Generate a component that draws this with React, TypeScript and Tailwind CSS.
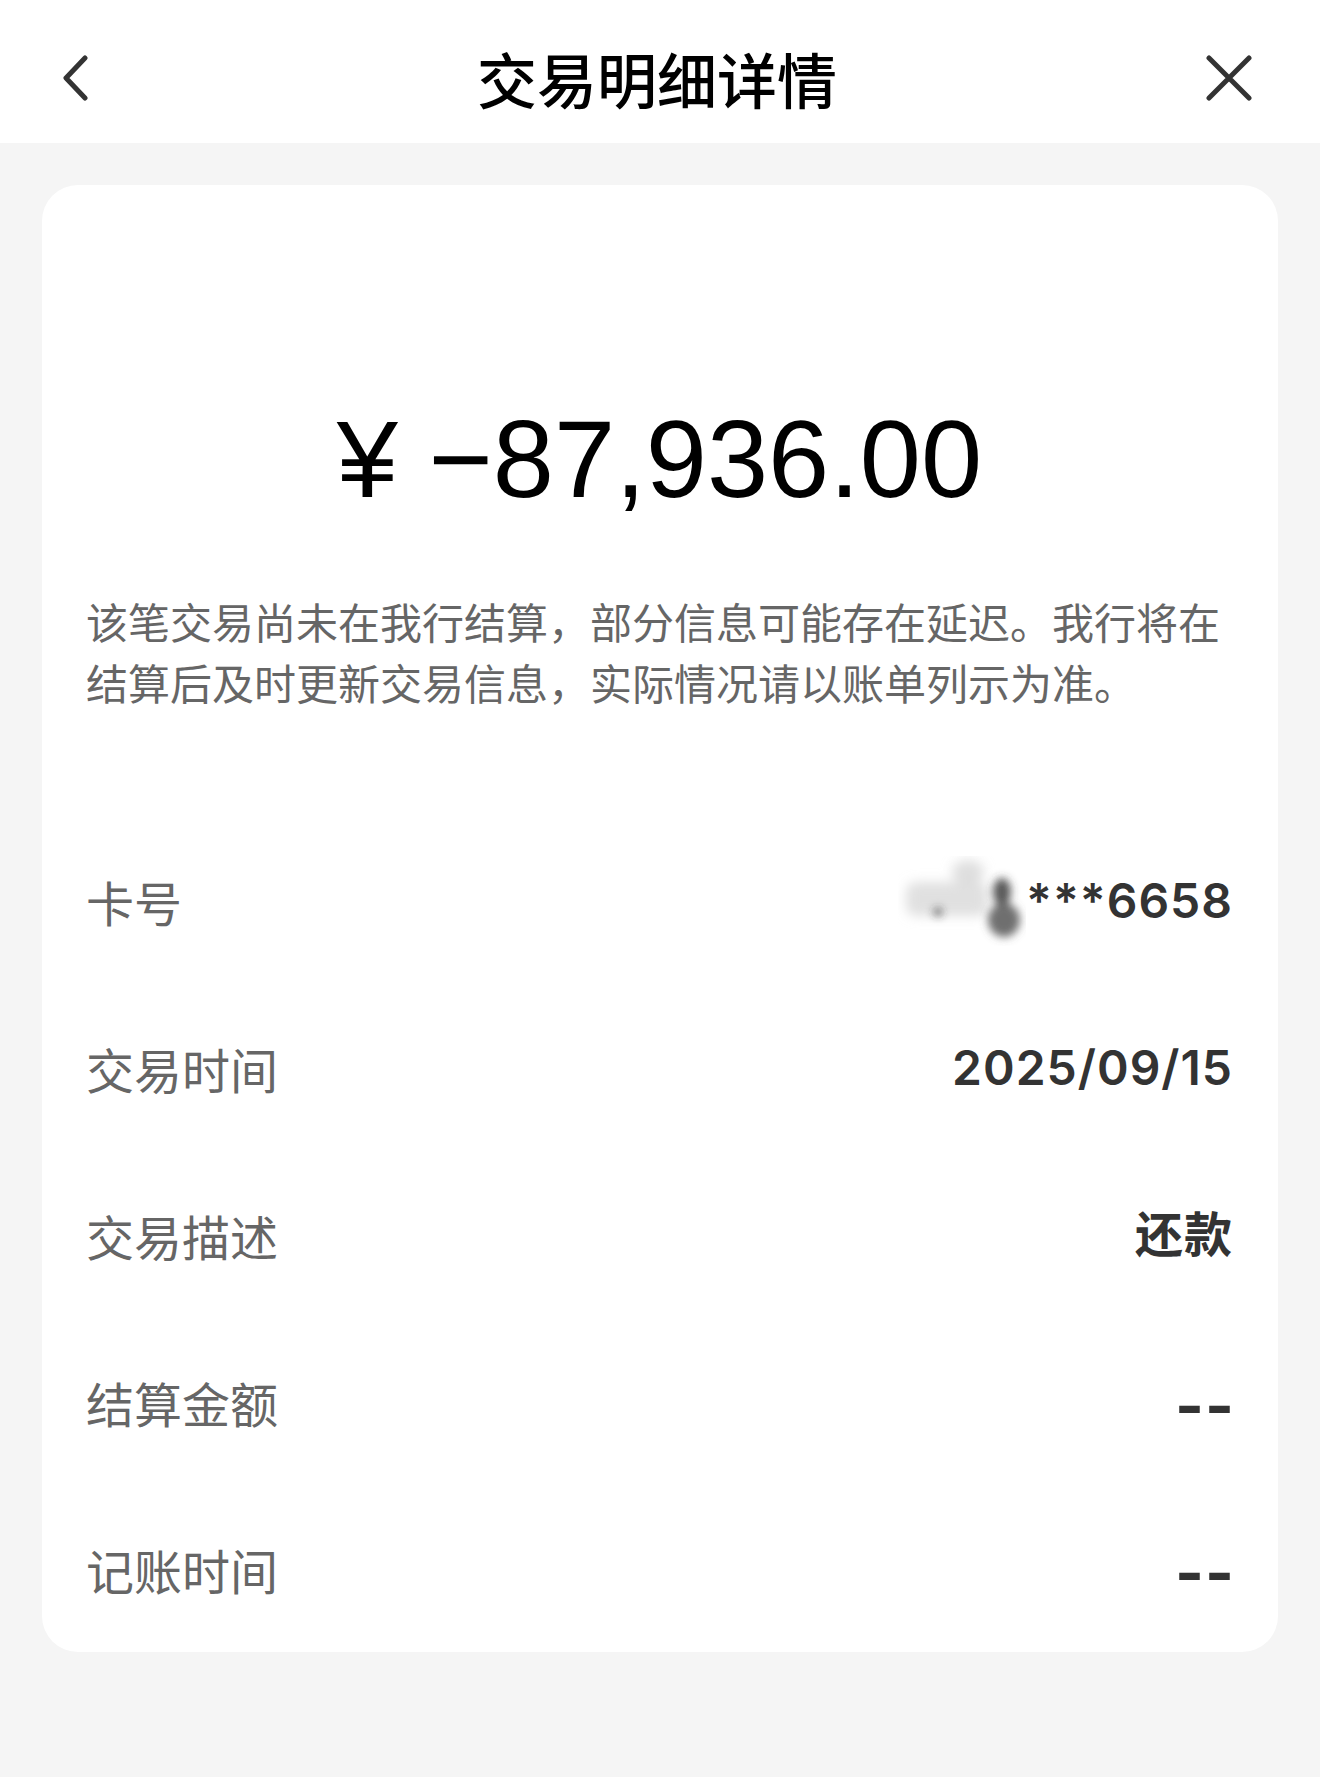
import React from 'react';

const rows = [
  { label: '卡号', value: '***6658', masked: true },
  { label: '交易时间', value: '2025/09/15' },
  { label: '交易描述', value: '还款' },
  { label: '结算金额', value: '--', dash: true },
  { label: '记账时间', value: '--', dash: true },
];

function CardSmudge() {
  // 卡号前几位被涂抹，画一团模糊
  return (
    <svg width="128" height="90" viewBox="0 0 128 90" className="-my-[21px]">
      <defs>
        <filter id="smudge-soft" x="-40%" y="-40%" width="180%" height="180%">
          <feGaussianBlur stdDeviation="6" />
        </filter>
        <filter id="smudge-dark" x="-40%" y="-40%" width="180%" height="180%">
          <feGaussianBlur stdDeviation="4.5" />
        </filter>
      </defs>
      <g filter="url(#smudge-soft)">
        <rect x="8" y="26" width="82" height="34" rx="10" fill="#d6d6d6" opacity="0.75" />
        <ellipse cx="70" cy="16" rx="16" ry="12" fill="#d0d0d0" opacity="0.7" />
      </g>
      <g filter="url(#smudge-dark)">
        <ellipse cx="104" cy="36" rx="9" ry="14" fill="#3a3a3a" opacity="0.85" />
        <ellipse cx="106" cy="64" rx="16" ry="17" fill="#555" opacity="0.85" />
        <circle cx="40" cy="56" r="4" fill="#333" opacity="0.8" />
      </g>
    </svg>
  );
}

function TransactionDetailPage() {
  return (
    <div className="min-h-[1777px] w-full bg-[#f5f5f5] font-['Noto_Sans_CJK_SC',sans-serif]">
      <header className="grid h-[143px] grid-cols-[1fr_auto_1fr] items-center bg-white px-[62px] pt-[12px] pr-[68px]">
        <svg width="26" height="46" viewBox="0 0 26 46" fill="none">
          <path d="M23 3 L4 23 L23 43" stroke="#333" strokeWidth="5" strokeLinecap="round" strokeLinejoin="round" />
        </svg>
        <h1 className="text-[60px] font-medium leading-none text-black">交易明细详情</h1>
        <svg width="46" height="46" viewBox="0 0 46 46" fill="none" className="justify-self-end">
          <path d="M3 3 L43 43 M43 3 L3 43" stroke="#333" strokeWidth="5" strokeLinecap="round" />
        </svg>
      </header>

      <div className="px-[42px] pt-[42px]">
        <div className="rounded-[36px] bg-white pl-[44px] pr-[45px] pt-[209px]">
          <div className="text-center font-['Liberation_Sans',sans-serif] text-[110px] leading-[130px] text-black">
            ¥ −87,936.00
          </div>
          <p className="mt-[66px] text-[42px] leading-[61px] text-[#666]">
            该笔交易尚未在我行结算，部分信息可能存在延迟。我行将在结算后及时更新交易信息，实际情况请以账单列示为准。
          </p>

          <ul className="mt-[105px]">
            {rows.map((row) => (
              <li key={row.label} className="flex h-[167px] items-center justify-between">
                <span className="text-[48px] leading-none text-[#666]">{row.label}</span>
                <span className="flex items-center font-['Inter','Noto_Sans_CJK_SC',sans-serif] text-[48px] font-semibold leading-none tracking-[1px] text-[#333]">
                  {row.masked && <CardSmudge />}
                  {row.dash ? (
                    <span className="-mr-[2px] mt-[8px] text-[62px] font-bold tracking-[1px]">{row.value}</span>
                  ) : (
                    row.value
                  )}
                </span>
              </li>
            ))}
          </ul>
        </div>
      </div>
    </div>
  );
}

export default TransactionDetailPage;
